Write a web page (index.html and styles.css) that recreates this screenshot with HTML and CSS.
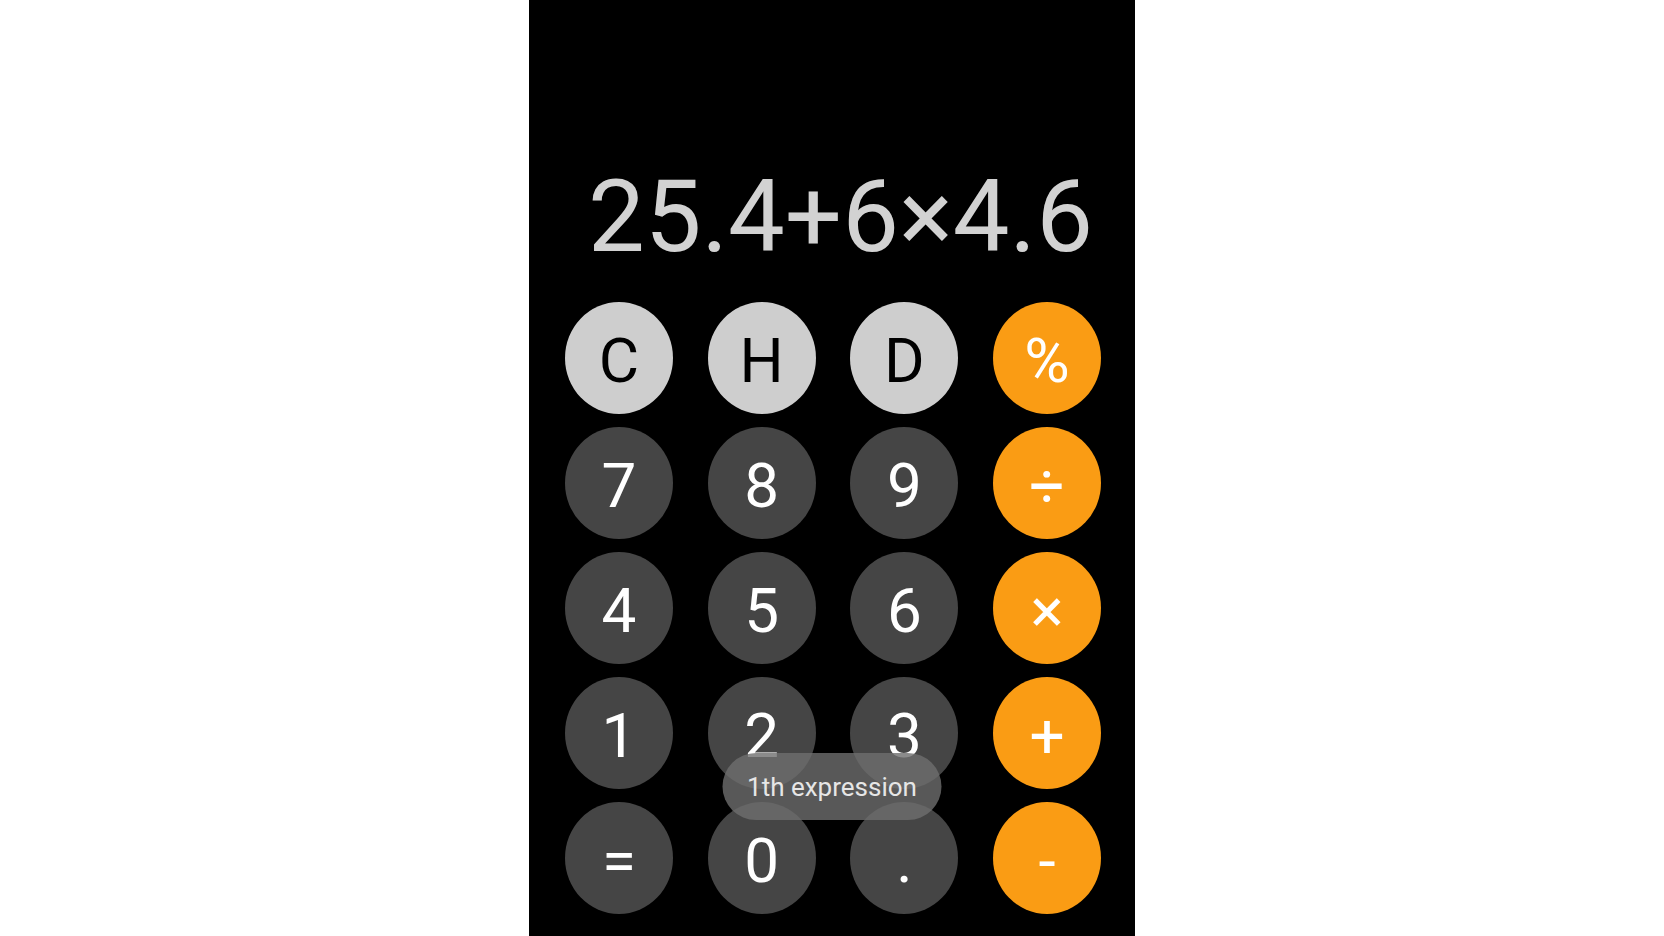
FILE: index.html
```html
<!DOCTYPE html>
<html lang="en">
<head>
  <meta charset="UTF-8" />
  <meta name="viewport" content="width=device-width, initial-scale=1.0" />
  <title>Calculator</title>
  <link rel="stylesheet" href="styles.css">
</head>
<body>
  <div class="phone">
    <div class="display" id="display">25.4+6×4.6</div>
    <div class="keypad">
      <button class="key light">C</button>
      <button class="key light">H</button>
      <button class="key light">D</button>
      <button class="key op">%</button>

      <button class="key">7</button>
      <button class="key">8</button>
      <button class="key">9</button>
      <button class="key op">÷</button>

      <button class="key">4</button>
      <button class="key">5</button>
      <button class="key">6</button>
      <button class="key op">×</button>

      <button class="key">1</button>
      <button class="key">2</button>
      <button class="key">3</button>
      <button class="key op">+</button>

      <button class="key">=</button>
      <button class="key">0</button>
      <button class="key">.</button>
      <button class="key op">-</button>
    </div>
    <div class="toast">1th expression</div>
  </div>
</body>
</html>
```

FILE: styles.css
```css
body {
  margin: 0;
  background: #fff;
  font-family: Roboto, "Noto Sans", sans-serif;
}
.phone {
  position: relative;
  width: 606px;
  height: 936px;
  margin: 0 auto;
  background: #000;
  display: flex;
  flex-direction: column;
}
.display {
  box-sizing: border-box;
  height: 302px;
  padding: 166px 42px 0 0;
  text-align: right;
  font-size: 101px;
  line-height: 101px;
  font-weight: 400;
  color: #d2d2d2;
  white-space: nowrap;
}
.keypad {
  display: grid;
  grid-template-columns: repeat(4, 108px);
  grid-auto-rows: 112px;
  justify-content: space-between;
  row-gap: 13px;
  padding: 0 34px 0 36px;
}
.key {
  border: none;
  border-radius: 50%;
  padding: 6px 0 0;
  background: #454545;
  color: #fff;
  font-family: Roboto, "Noto Sans", sans-serif;
  font-size: 62px;
  line-height: 1;
  display: flex;
  align-items: center;
  justify-content: center;
  cursor: pointer;
}
.key.light {
  background: #cecece;
  color: #000;
}
.key.op {
  background: #fa9c14;
  color: #fff;
}
.toast {
  position: absolute;
  left: 50%;
  top: 753px;
  transform: translateX(-50%);
  width: 219px;
  height: 67px;
  border-radius: 34px;
  background: rgba(110, 110, 110, 0.8);
  color: #e6e6e6;
  font-size: 26px;
  display: flex;
  align-items: center;
  justify-content: center;
}
```
